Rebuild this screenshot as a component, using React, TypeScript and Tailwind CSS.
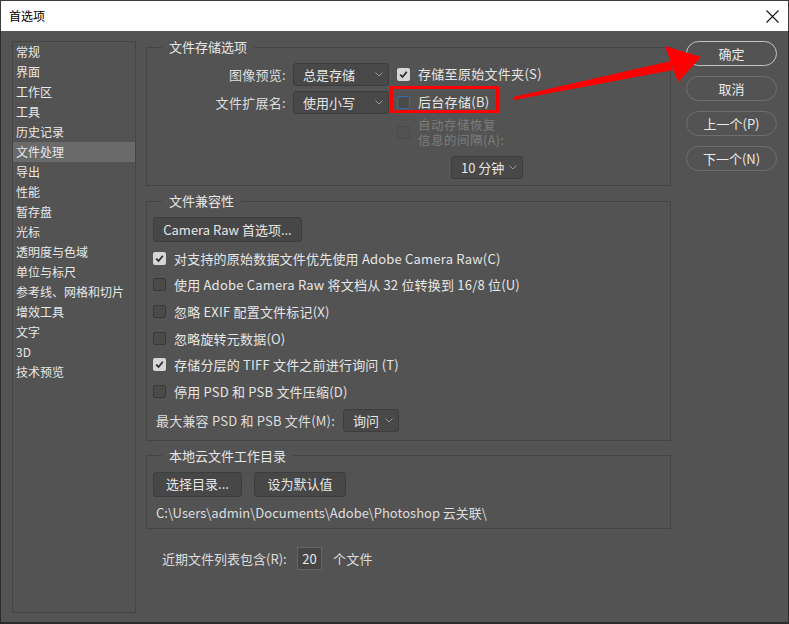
import React from "react";

const FONT = "font-['Noto_Sans_CJK_SC','Noto_Sans',sans-serif]";

function Check({ state }: { state: "on" | "off" | "focus" | "disabled" }) {
  if (state === "on") {
    return (
      <span className="w-[13px] h-[13px] rounded-[2px] bg-[#d6d6d6] flex items-center justify-center shrink-0">
        <svg width="9" height="9" viewBox="0 0 9 9">
          <path d="M1.2 4.6 L3.6 7 L7.8 1.8" fill="none" stroke="#2e2e2e" strokeWidth="1.8" />
        </svg>
      </span>
    );
  }
  const cls =
    state === "focus"
      ? "border-[#2f6bb8] bg-[#4a4a4a]"
      : state === "disabled"
      ? "border-[#4b4b4b] bg-[#515151]"
      : "border-[#383838] bg-[#4b4b4b]";
  return <span className={`block w-[13px] h-[13px] rounded-[2px] border ${cls} shrink-0`} />;
}

function Chevron() {
  return (
    <svg width="8" height="5" viewBox="0 0 8 5" className="shrink-0">
      <path d="M0.5 0.5 L4 4 L7.5 0.5" fill="none" stroke="#9a9a9a" strokeWidth="1" />
    </svg>
  );
}

function Dropdown({ text, w }: { text: string; w: string }) {
  return (
    <div
      className={`${w} h-[23px] rounded-[3px] border border-[#3d3d3d] bg-[#484848] flex items-center justify-between pl-[9px] pr-[5px] text-[13px] text-[#e6e6e6] shrink-0`}
    >
      <span className="leading-none">{text}</span>
      <Chevron />
    </div>
  );
}

function Btn({ text, w }: { text: string; w: string }) {
  return (
    <div
      className={`${w} h-[25px] rounded-[3px] border border-[#3d3d3d] bg-[#474747] flex items-center justify-center text-[13px] text-[#e6e6e6] shrink-0 whitespace-nowrap`}
    >
      {text}
    </div>
  );
}

function Pill({ text, primary }: { text: string; primary?: boolean }) {
  return (
    <div
      className={`w-[91px] h-[25px] rounded-full flex items-center justify-center text-[13px] text-[#eaeaea] ${
        primary ? "border-[1.5px] border-[#c4c4c4]" : "border border-[#6e6e6e]"
      }`}
    >
      {text}
    </div>
  );
}

function CheckRow({ state, text }: { state: "on" | "off"; text: string }) {
  return (
    <div className="h-[26.6px] flex items-center pl-[6px] gap-[8px] text-[13px] text-[#e6e6e6] whitespace-nowrap">
      <Check state={state} />
      <span className="leading-none tracking-[0.2px]">{text}</span>
    </div>
  );
}

const sideItems = [
  "常规",
  "界面",
  "工作区",
  "工具",
  "历史记录",
  "文件处理",
  "导出",
  "性能",
  "暂存盘",
  "光标",
  "透明度与色域",
  "单位与标尺",
  "参考线、网格和切片",
  "增效工具",
  "文字",
  "3D",
  "技术预览",
];

function Legend({ text }: { text: string }) {
  return (
    <legend className="ml-[15px] px-[7px] text-[13px] leading-[18px] text-[#e6e6e6]">{text}</legend>
  );
}

export default function App() {
  return (
    <div className={`relative w-[789px] h-[624px] flex flex-col ${FONT} overflow-hidden`}>
      {/* Title bar */}
      <div className="h-[31px] bg-white border-t border-[#3a3a3a] border-x border-x-[#3a3a3a] flex items-center justify-between pl-[8px] pr-[9px] shrink-0">
        <span className="text-[12px] text-black leading-none">首选项</span>
        <svg width="13" height="13" viewBox="0 0 13 13">
          <path d="M0.5 0.5 L12.5 12.5 M12.5 0.5 L0.5 12.5" stroke="#111" strokeWidth="1.1" />
        </svg>
      </div>

      {/* Body */}
      <div className="flex-1 bg-[#535353] border-x border-b-2 border-[#2c2c2c] flex pl-[11px] pt-[10px]">
        {/* Sidebar */}
        <div className="w-[124px] h-[572px] border border-[#444444] shrink-0">
          {sideItems.map((s) => (
            <div
              key={s}
              className={`h-[20px] flex items-center pl-[3px] text-[12px] leading-none text-[#e8e8e8] whitespace-nowrap ${
                s === "文件处理" ? "bg-[#6a6a6a]" : ""
              }`}
            >
              {s}
            </div>
          ))}
        </div>

        {/* Main column */}
        <div className="w-[525px] ml-[10px] shrink-0 flex flex-col">
          {/* Group 1 */}
          <fieldset className="border border-[#444444] mt-[-3px] pb-[6px]">
            <Legend text="文件存储选项" />
            <div className="flex pt-[7px]">
              <div className="w-[250px] flex flex-col gap-[5px] shrink-0">
                <div className="h-[23px] flex items-center">
                  <span className="w-[146px] text-right pr-[7px] text-[13px] text-[#dedede] leading-none whitespace-nowrap tracking-[0.3px]">
                    图像预览:
                  </span>
                  <Dropdown text="总是存储" w="w-[96px]" />
                </div>
                <div className="h-[23px] flex items-center">
                  <span className="w-[146px] text-right pr-[7px] text-[13px] text-[#dedede] leading-none whitespace-nowrap tracking-[0.3px]">
                    文件扩展名:
                  </span>
                  <Dropdown text="使用小写" w="w-[96px]" />
                </div>
              </div>
              <div className="flex flex-col text-[13px] whitespace-nowrap">
                <div className="h-[23px] flex items-center gap-[8px] text-[#e6e6e6]">
                  <Check state="on" />
                  <span className="leading-none -mt-[3px] tracking-[0.3px]">存储至原始文件夹(S)</span>
                </div>
                <div className="h-[23px] mt-[5px] flex items-center gap-[8px] text-[#e6e6e6]">
                  <Check state="focus" />
                  <span className="leading-none -mt-[3px] tracking-[0.3px]">后台存储(B)</span>
                </div>
                <div className="mt-[3px] flex items-start gap-[8px] text-[#7c7c7c]">
                  <div className="mt-[9px]">
                    <Check state="disabled" />
                  </div>
                  <div className="flex flex-col text-[12.5px] tracking-[0.5px]">
                    <div className="h-[15px] leading-[15px]">自动存储恢复</div>
                    <div className="h-[15px] leading-[15px]">信息的间隔(A):</div>
                  </div>
                </div>
                <div className="mt-[9px] ml-[54px]">
                  <Dropdown text="10 分钟" w="w-[72px]" />
                </div>
              </div>
            </div>
          </fieldset>

          {/* Group 2 */}
          <fieldset className="border border-[#444444] mt-[6px] pb-[8px]">
            <Legend text="文件兼容性" />
            <div className="pt-[7px] pl-[6px]">
              <Btn text="Camera Raw 首选项..." w="w-[149px]" />
            </div>
            <div className="mt-[3px] flex flex-col">
              <CheckRow state="on" text="对支持的原始数据文件优先使用 Adobe Camera Raw(C)" />
              <CheckRow state="off" text="使用 Adobe Camera Raw 将文档从 32 位转换到 16/8 位(U)" />
              <CheckRow state="off" text="忽略 EXIF 配置文件标记(X)" />
              <CheckRow state="off" text="忽略旋转元数据(O)" />
              <CheckRow state="on" text="存储分层的 TIFF 文件之前进行询问 (T)" />
              <CheckRow state="off" text="停用 PSD 和 PSB 文件压缩(D)" />
            </div>
            <div className="mt-[4px] h-[23px] flex items-center pl-[9px]">
              <span className="w-[187px] text-[13px] text-[#dedede] leading-none whitespace-nowrap tracking-[0.2px]">
                最大兼容 PSD 和 PSB 文件(M):
              </span>
              <Dropdown text="询问" w="w-[56px]" />
            </div>
          </fieldset>

          {/* Group 3 */}
          <fieldset className="border border-[#444444] mt-[6px] pb-[7px]">
            <Legend text="本地云文件工作目录" />
            <div className="pt-[7px] pl-[6px] flex gap-[12px]">
              <Btn text="选择目录..." w="w-[89px]" />
              <Btn text="设为默认值" w="w-[92px]" />
            </div>
            <div className="mt-[7px] pl-[9px] h-[17px] flex items-center text-[13px] text-[#dedede] leading-none whitespace-nowrap">
              C:\Users\admin\Documents\Adobe\Photoshop 云关联\
            </div>
          </fieldset>

          {/* Recent files */}
          <div className="mt-[18px] h-[23px] flex items-center pl-[16px] text-[13px] text-[#dedede] whitespace-nowrap">
            <span className="w-[135px] leading-none">近期文件列表包含(R):</span>
            <div className="w-[25px] h-[23px] border border-[#646464] bg-[#464646] flex items-center justify-center text-[13px] text-[#e6e6e6] leading-none">
              20
            </div>
            <span className="ml-[11px] leading-none tracking-[0.3px]">个文件</span>
          </div>
        </div>

        {/* Right buttons */}
        <div className="ml-[15px] w-[91px] flex flex-col gap-[10px] shrink-0">
          <Pill text="确定" primary />
          <Pill text="取消" />
          <Pill text="上一个(P)" />
          <Pill text="下一个(N)" />
        </div>
      </div>

      {/* Annotation: red box */}
      <div className="absolute left-[390px] top-[86px] w-[109px] h-[27px] border-[3px] border-[#ff0000] pointer-events-none" />

      {/* Annotation: red arrow */}
      <svg
        className="absolute left-0 top-0 pointer-events-none"
        width="789"
        height="624"
        viewBox="0 0 789 624"
      >
        <polygon points="513,97 671,61 673,70 514,100" fill="#ff0000" />
        <polygon points="701,57 665,46 678,82" fill="#ff0000" />
      </svg>
    </div>
  );
}
